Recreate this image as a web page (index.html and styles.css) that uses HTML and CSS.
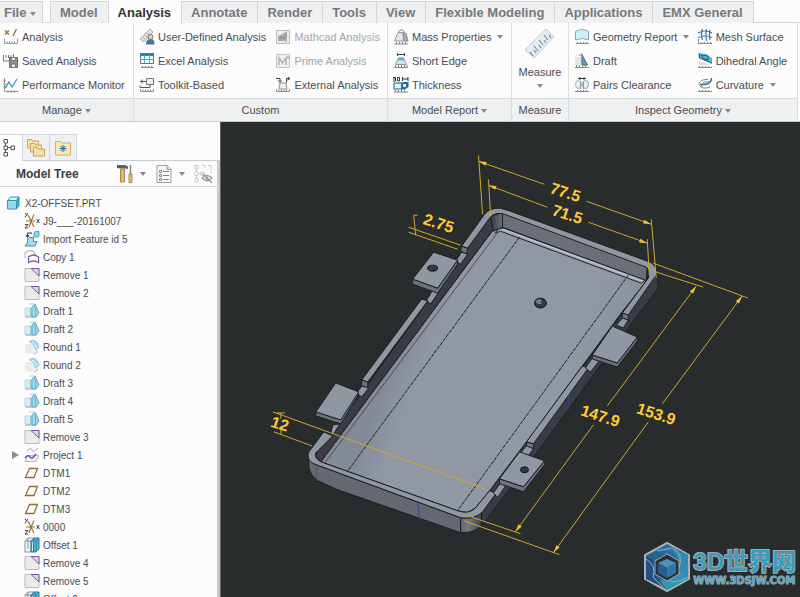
FILE: index.html
```html
<!DOCTYPE html>
<html lang="en">
<head>
  <meta charset="UTF-8" />
  <meta name="viewport" content="width=device-width, initial-scale=1.0" />
  <title>X2-OFFSET.PRT</title>
  <link rel="stylesheet" href="styles.css">
</head>
<body>
  <!-- Icon sheet -->
  <svg class="sprites" aria-hidden="true">
    <symbol id="ruler" viewBox="0 0 16 16">
      <path d="M1.500 12v2.500h13V12M4 12.500v2M6.500 12.500v2M9 12.500v2M11.500 12.500v2" fill="none" stroke="#8b8f92"/>
    </symbol>
    <symbol id="i-analysis" viewBox="0 0 16 16">
      <path d="M2 1.500l4 4M6 1.500l-4 4M13.500 0L10 7" fill="none" stroke="#8f7433" stroke-width="1.300"/>
      <path d="M1.500 9.500v5h13v-5M4 12v2M6.500 12v2M9 12v2M11.500 12v2" fill="none" stroke="#9a9ea1"/>
    </symbol>
    <symbol id="i-saved" viewBox="0 0 16 16">
      <path d="M.500 2v6h6M3 2v3M5.500 2v3M8 2v3M10.500 1v3" fill="none" stroke="#777"/>
      <path d="M6.500 4.500h8v10h-8z" fill="#8d9194" stroke="#666"/>
      <path d="M8.500 4.500h4v3h-4zM8.500 11h4v3.500h-4z" fill="#eee" stroke="#777"/>
    </symbol>
    <symbol id="i-monitor" viewBox="0 0 16 16">
      <path d="M1.500 1v13.500h14M0 4h3M0 7h3M0 10h3M5 13v3M8 13v3M11 13v3" fill="none" stroke="#999"/>
      <path d="M2 11l4-6 3 5 5-8" fill="none" stroke="#3d9cc4" stroke-width="1.400"/>
    </symbol>
    <symbol id="i-user" viewBox="0 0 16 16">
      <path d="M1 10L11 0l3 3-9 10z" fill="#e2e4e5" stroke="#aaa"/>
      <path d="M4 8l2 2M6 6l2 2M8 4l2 2" stroke="#999"/>
      <path d="M7 15.500c0-4 2-5.500 4.500-5.500s4 1.500 4 5.500z" fill="#3f769f"/>
      <circle cx="11.500" cy="8" r="2.500" fill="#d9d3cb" stroke="#777"/>
    </symbol>
    <symbol id="i-excel" viewBox="0 0 16 16">
      <path d="M1.500 .500h13v10h-13z" fill="#eefaff" stroke="#60757f"/>
      <path d="M1 0h14v3H1z" fill="#2587ad"/>
      <path d="M5.500 2v8M10.500 2v8M1 6.500h14" stroke="#4fa9c7"/>
      <path d="M2 14.500h13M3.500 13v2M6.500 13v2M9.500 13v2M12.500 13v2" stroke="#888"/>
    </symbol>
    <symbol id="i-toolkit" viewBox="0 0 16 16">
      <path d="M7.500 1.500h7v6h-7z" fill="#eceeef" stroke="#777"/>
      <path d="M1 4.500h6M3 2.500v4M11 8v2.500H1v-2" fill="none" stroke="#555"/>
      <use href="#ruler"/>
    </symbol>
    <symbol id="i-mathcad" viewBox="0 0 16 16">
      <path d="M1.500 1.500h13v13h-13z" fill="#eee" stroke="#bbb"/>
      <path d="M3 12V7l4-2 5-3v7l-4 3z" fill="#b4b4b4"/>
      <path d="M5 12V7l2 3 2-3v5M11 4v9" fill="none" stroke="#888"/>
    </symbol>
    <symbol id="i-prime" viewBox="0 0 16 16">
      <path d="M1.500 1.500h13v13h-13z" fill="#eee" stroke="#c4c4c4"/>
      <path d="M4 12V5l3.500 5L11 5v7M13 3v3" fill="none" stroke="#b4b4b4" stroke-width="1.500"/>
    </symbol>
    <symbol id="i-external" viewBox="0 0 16 16">
      <path d="M1 1.500h4v3M3.500 3.500L5 5.500l1.500-2M15 1.500h-3.500v4M12.500 0L15 1.500 12.500 3" fill="none" stroke="#444"/>
      <path d="M5 6h6l1 6H4z" fill="#eee" stroke="#999"/>
      <use href="#ruler"/>
    </symbol>
    <symbol id="i-mass" viewBox="0 0 16 16">
      <path d="M6 4c-1-4 6-4 5 0" fill="none" stroke="#777"/>
      <path d="M5 3.500h5L11 12H1.500z" fill="#e3e6e7" stroke="#999"/>
      <path d="M10 3.500l3 1L15 12h-4z" fill="#a7adb0" stroke="#888"/>
      <path d="M1 15h14M3.500 13v2M6.500 13v2M9.500 13v2M12.500 13v2" stroke="#888"/>
    </symbol>
    <symbol id="i-edge" viewBox="0 0 16 16">
      <path d="M4.500 0v3M11.500 0v3M4.500 1.500h7" stroke="#444"/>
      <path d="M5.500 5h5l3 6.500h-11z" fill="#dfe3e5" stroke="#999"/>
      <path d="M5.500 4.500h5l1 3h-7z" fill="#4cb8dc"/>
      <path d="M1 14.500h14M2.500 12v2M5.500 12v2M8.500 12v2M11.500 12v2M14 12v2" stroke="#888"/>
    </symbol>
    <symbol id="i-thick" viewBox="0 0 16 16">
      <path d="M1 6h8v6H1z" fill="#dff4fb" stroke="#1b6585"/>
      <path d="M8 6l3-1h4.500v5L12 12.500H8z" fill="#1f7095"/>
      <path d="M10 7h3v3h-3z" fill="#e7f6fb"/>
      <path d="M0 .500h2.500v3.500H0M0 2h2M4.500 .500v3.500h2v-3.500zM9.500 0v4M15 0v4M9.500 2H15" fill="none" stroke="#333"/>
      <path d="M1 15h14M2.500 13v2M5.500 13v2M8.500 13v2M11.500 13v2" stroke="#888"/>
    </symbol>
    <symbol id="i-geometry" viewBox="0 0 16 16">
      <path d="M1.500 2.500q6-4 13 0v8.500q-6-3-13 0z" fill="#cdf1fa" stroke="#8aa3ad"/>
      <path d="M2 14.500h13M3.500 13v2M6.500 13v2M9.500 13v2M12.500 13v2" stroke="#888"/>
    </symbol>
    <symbol id="i-draft-an" viewBox="0 0 16 16">
      <path d="M1 4h6v8H1z" fill="#e1e4e5"/>
      <path d="M8 2L13.500 12H8z" fill="#4aa7ca" stroke="#3c6477"/>
      <path d="M5 2.500L8 1v11" fill="none" stroke="#888"/>
      <path d="M1 14.500h14M2.500 12v2M5.500 12v2M8.500 12v2M11.500 12v2" stroke="#888"/>
    </symbol>
    <symbol id="i-pairs" viewBox="0 0 16 16">
      <ellipse cx="4.500" cy="7.500" rx="3" ry="4" fill="#eef0f1" stroke="#aaa"/>
      <ellipse cx="11.500" cy="7.500" rx="3" ry="4" fill="#dff3f8" stroke="#8aa3ad"/>
      <path d="M4 1.500h8M6 0v3M10 0v3" stroke="#444"/>
      <path d="M6.500 4v8M9.500 4v8" stroke="#999"/>
      <path d="M1 14.500h14M3.500 13v2M6.500 13v2M9.500 13v2M12.500 13v2" stroke="#888"/>
    </symbol>
    <symbol id="i-mesh" viewBox="0 0 16 16">
      <path d="M1 4q7-4 14 0M1 8.500q7-3 14 0M5.500 0q-2 5 0 11M9.500 0q-1 5 0 12M13 1q-1 5 0 10" fill="none" stroke="#347b9b" stroke-width="1.200"/>
      <path d="M1 14.500h14M1.500 10v4M4.500 13v2M7.500 13v2M10.500 13v2M13.500 13v2" stroke="#888"/>
    </symbol>
    <symbol id="i-dihedral" viewBox="0 0 16 16">
      <path d="M1 0l8 1 6 4v6L2 5z" fill="#58b7d9"/>
      <path d="M4 2l7 1v4L7 6zM2.500 1v4L15 10" fill="none" stroke="#215e7c"/>
      <path d="M2 8l12 4H2z" fill="#dadddf"/>
      <path d="M1 14.500h14M2.500 13v2M5.500 13v2M8.500 13v2M11.500 13v2" stroke="#888"/>
    </symbol>
    <symbol id="i-curvature" viewBox="0 0 16 16">
      <path d="M3 7.500c1 0 8 .500 10-2.500 1-1 1.500-2 1.500-4" fill="none" stroke="#2f7595" stroke-width="1.500"/>
      <path d="M11 2.500C4 2 1 6 2.500 8.500S8 12 13 10M5 10c-1-4 2-5.500 7-5" fill="none" stroke="#7c8589"/>
      <path d="M1 14.500h14M2.500 13v2M5.500 13v2M8.500 13v2M11.500 13v2" stroke="#888"/>
    </symbol>
    <symbol id="i-measure" viewBox="0 0 32 32">
      <path d="M1 22L22 1l8 8L10 30z" fill="#e9ebec" stroke="#c8cbcd"/>
      <path d="M9 28l-3-4M12 25l-2-3M14 23l-4-5M17 20l-2-3M19 17l-4-5M22 15l-2-3M24 12l-4-5M27 10l-2-3" stroke="#5c93ad" stroke-width="1.200"/>
    </symbol>

    <symbol id="t-tree" viewBox="4 0 16 20">
      <path d="M5 1.500h3.500V5H5zM5 8h3.500v3.500H5zM5 14.500h3.500V18H5zM12 8h3.500v3.500H12z" fill="#fff" stroke="#555"/>
      <path d="M6.500 5v3M6.500 12v2.500M9 9.500h3" stroke="#555"/>
    </symbol>
    <symbol id="t-folders" viewBox="0 0 18 20">
      <g fill="#f8dfa8" stroke="#c9a45c">
        <path d="M.500 1.500h4l1 1.500h6v7H.500z"/>
        <path d="M3.500 5.500h4L8.500 7h6v7h-11z"/>
        <path d="M6.500 9.500h4l1 1.500h6v7h-11z"/>
      </g>
    </symbol>
    <symbol id="t-star" viewBox="0 0 18 20">
      <path d="M1.500 3.500h5L8 5h8.500v12h-15z" fill="#fae6b6" stroke="#cfae70"/>
      <path d="M9 7v7M5.500 10.500h7M6.500 8l5 5M11.500 8l-5 5" stroke="#236f99"/>
    </symbol>
    <symbol id="t-hammer" viewBox="0 0 16 20">
      <path d="M0 1h8l3 1.500V5L8 4.500H3L0 4z" fill="#5b6064"/>
      <path d="M3.500 5h4v13h-4z" fill="#e0b674" stroke="#b08450"/>
      <path d="M13.500 1v9" stroke="#888" stroke-width="1.500"/>
      <path d="M12 10h3v8.500h-3z" fill="#e8c07c" stroke="#b08450"/>
    </symbol>
    <symbol id="t-list" viewBox="0 0 16 20">
      <path d="M1 1.500h10l4 4v13H1z" fill="#f7f8f8" stroke="#9aa0a3"/>
      <path d="M11 1.500v4h4" fill="#d7dbdd" stroke="#9aa0a3"/>
      <path d="M3.500 6.500h2v2h-2zM3.500 10.500h2v2h-2zM3.500 14.500h2v2h-2z" fill="none" stroke="#888"/>
      <path d="M7 7.500h6M7 11.500h6M7 15.500h6" stroke="#888"/>
    </symbol>
    <symbol id="t-hide" viewBox="0 0 20 20">
      <path d="M2 1.500h3V5H2zM2 8h3v3.500H2zM2 14.500h3V18H2zM8 8h3v3.500H8zM9 1.500h3v3M15 1.500h3v8M3.500 5v3M3.500 12v2.500M5 9.500h3" fill="none" stroke="#c9ccce"/>
      <path d="M9 14q5-5 10 0-5 5-10 0zM10 10l9 9" fill="none" stroke="#96999c" stroke-width="1.300"/>
      <circle cx="14" cy="14" r="1.500" fill="#96999c"/>
    </symbol>

    <symbol id="f-part" viewBox="0 0 16 16">
      <path d="M1.500 5.500h9V14h-9z" fill="#8fdcf4" stroke="#3d93b4"/>
      <path d="M1.500 5.500L4.500 2H13l-2.500 3.500z" fill="#d3f3fc" stroke="#3d93b4"/>
      <path d="M10.500 5.500L13 2v8.500L10.500 14z" fill="#41a6ca" stroke="#3d93b4"/>
    </symbol>
    <symbol id="f-csys" viewBox="0 0 16 16">
      <path d="M2 8h9M4 2l6 12M10 1.500Q7 8 5 14" stroke="#94762f" stroke-width="1.200" fill="none"/>
      <path d="M1 0l1.500 2L4 0M2.500 2L1 4.500M1 11.500h3L1 15h3M12.500 6l3 4M15.500 6l-3 4" stroke="#444" fill="none"/>
    </symbol>
    <symbol id="f-import" viewBox="0 0 16 16">
      <path d="M3.500 6V2H8M2 4l1.500 2.500L5 4" fill="none" stroke="#333"/>
      <path d="M10 2l1-1.500h4V5l-1 1h-4z" fill="#8bd6ee" stroke="#5aa6c3"/>
      <path d="M3.500 12V8L5 6.500h4.500v4H13L11 15H1l2-3z" fill="#9bdcf1" stroke="#4494b3"/>
    </symbol>
    <symbol id="f-copy" viewBox="0 0 16 16">
      <path d="M1 9V4q5-5 10 0v2" fill="none" stroke="#bcbcc0" stroke-width="1.200"/>
      <path d="M4.500 13.500V8q5-4 10 0v5.500q-5-3-10 0z" fill="#fff" stroke="#7e5aa4" stroke-width="1.300"/>
    </symbol>
    <symbol id="f-remove" viewBox="0 0 16 16">
      <path d="M1 1.500h14v13H1z" fill="#ebebec" stroke="#bcbdbf"/>
      <path d="M7 1.500h8V9z" fill="#ddd0f0" stroke="#7b57a6"/>
    </symbol>
    <symbol id="f-draft" viewBox="0 0 16 16">
      <path d="M1 5h8v8H1z" fill="#d7ebf2" stroke="#c0d6de"/>
      <path d="M8 4l3-3 4 9-3 4H8z" fill="#9ed9ec" stroke="#60a9c4"/>
      <path d="M1 14h11M7 5v8M11 2l1 11" fill="none" stroke="#6baec6"/>
      <path d="M5 1h6" stroke="#ccc"/>
    </symbol>
    <symbol id="f-round" viewBox="0 0 16 16">
      <path d="M1 5h6q3 2 3 9.500H1z" fill="#ececed"/>
      <path d="M10 15l4-4v2l-4 3z" fill="#bbb"/>
      <path d="M5 3q2-2 4-2 6 2 6 8l-4 3Q10 5 5 3z" fill="#8fd8f0"/>
      <path d="M5 3q2-2 4-2 6 2 6 8" fill="none" stroke="#b5cdd6"/>
      <path d="M8 3q4 2 5 6" fill="none" stroke="#fff"/>
    </symbol>
    <symbol id="f-project" viewBox="0 0 16 16">
      <path d="M3 4q3-4 5-1t6-2" fill="none" stroke="#b9b9bc" stroke-width="1.200"/>
      <path d="M1 14.500l3-6h10.500l-2.500 6z" fill="#f3f3f3" stroke="#b5b5b8"/>
      <path d="M1 11q3-4 5-1t6-3" fill="none" stroke="#7c4fb0" stroke-width="1.500"/>
    </symbol>
    <symbol id="f-plane" viewBox="0 0 16 16">
      <path d="M1.500 12.500l4-9h8l-3.500 9z" fill="none" stroke="#8e7338" stroke-width="1.300"/>
    </symbol>
    <symbol id="f-offset" viewBox="0 0 16 16">
      <path d="M1 4l3-3h6v11l-3 3H1zM1 4h6v11M7 4l3-3M4 1v11" fill="#f5f7f8" stroke="#8b9396"/>
      <path d="M7 4l3-3h5v11l-3 3H7z" fill="#53b3d4" stroke="#23779b"/>
      <path d="M7 4h5v11M12 4l3-3M9.500 4v11" fill="none" stroke="#2c82a5"/>
      <path d="M8 5h1v9H8z" fill="#c9edf8"/>
    </symbol>
  </svg>

  <!-- Ribbon -->
  <header class="ribbon">
    <nav class="tabs">
      <button class="tab file-tab">File <span class="caret"></span></button>
      <button class="tab first">Model</button>
      <button class="tab active">Analysis</button>
      <button class="tab">Annotate</button>
      <button class="tab">Render</button>
      <button class="tab">Tools</button>
      <button class="tab">View</button>
      <button class="tab">Flexible Modeling</button>
      <button class="tab">Applications</button>
      <button class="tab">EMX General</button>
    </nav>

    <div class="groups">
      <section class="group">
        <div class="commands">
          <div class="column">
            <button class="command"><svg class="icon"><use href="#i-analysis"/></svg>Analysis</button>
            <button class="command"><svg class="icon"><use href="#i-saved"/></svg>Saved Analysis</button>
            <button class="command"><svg class="icon"><use href="#i-monitor"/></svg>Performance Monitor</button>
          </div>
        </div>
        <button class="group-title">Manage <span class="caret"></span></button>
      </section>

      <section class="group">
        <div class="commands">
          <div class="column custom-column">
            <button class="command"><svg class="icon"><use href="#i-user"/></svg>User-Defined Analysis</button>
            <button class="command"><svg class="icon"><use href="#i-excel"/></svg>Excel Analysis</button>
            <button class="command"><svg class="icon"><use href="#i-toolkit"/></svg>Toolkit-Based</button>
          </div>
          <div class="column">
            <button class="command" disabled><svg class="icon"><use href="#i-mathcad"/></svg>Mathcad Analysis</button>
            <button class="command" disabled><svg class="icon"><use href="#i-prime"/></svg>Prime Analysis</button>
            <button class="command"><svg class="icon"><use href="#i-external"/></svg>External Analysis</button>
          </div>
        </div>
        <div class="group-title">Custom</div>
      </section>

      <section class="group">
        <div class="commands">
          <div class="column">
            <button class="command"><svg class="icon"><use href="#i-mass"/></svg>Mass Properties <span class="caret"></span></button>
            <button class="command"><svg class="icon"><use href="#i-edge"/></svg>Short Edge</button>
            <button class="command"><svg class="icon"><use href="#i-thick"/></svg>Thickness</button>
          </div>
        </div>
        <button class="group-title">Model Report <span class="caret"></span></button>
      </section>

      <section class="group">
        <button class="big-command">
          <svg class="big-icon"><use href="#i-measure"/></svg>
          Measure
          <span class="caret"></span>
        </button>
        <div class="group-title">Measure</div>
      </section>

      <section class="group">
        <div class="commands">
          <div class="column inspect-column">
            <button class="command"><svg class="icon"><use href="#i-geometry"/></svg>Geometry Report <span class="caret"></span></button>
            <button class="command"><svg class="icon"><use href="#i-draft-an"/></svg>Draft</button>
            <button class="command"><svg class="icon"><use href="#i-pairs"/></svg>Pairs Clearance</button>
          </div>
          <div class="column">
            <button class="command"><svg class="icon"><use href="#i-mesh"/></svg>Mesh Surface</button>
            <button class="command"><svg class="icon"><use href="#i-dihedral"/></svg>Dihedral Angle</button>
            <button class="command"><svg class="icon"><use href="#i-curvature"/></svg>Curvature <span class="caret"></span></button>
          </div>
        </div>
        <button class="group-title">Inspect Geometry <span class="caret"></span></button>
      </section>
    </div>
  </header>

  <div class="workspace">
    <!-- Model tree -->
    <aside class="sidebar">
      <div class="panel-tabs">
        <button class="panel-tab active" aria-label="Model Tree"><svg class="tool-icon"><use href="#t-tree"/></svg></button>
        <button class="panel-tab" aria-label="Folder Browser"><svg class="tool-icon"><use href="#t-folders"/></svg></button>
        <button class="panel-tab" aria-label="Favorites"><svg class="tool-icon"><use href="#t-star"/></svg></button>
      </div>
      <div class="tree-header">
        <h2>Model Tree</h2>
        <button class="tool" aria-label="Settings"><svg class="tool-icon"><use href="#t-hammer"/></svg><span class="caret"></span></button>
        <button class="tool" aria-label="Show"><svg class="tool-icon"><use href="#t-list"/></svg><span class="caret"></span></button>
        <button class="tool" aria-label="Hide tree"><svg class="tool-icon"><use href="#t-hide"/></svg></button>
      </div>
      <ul class="tree">
        <li class="root"><svg class="icon"><use href="#f-part"/></svg>X2-OFFSET.PRT</li>
        <li><svg class="icon"><use href="#f-csys"/></svg>J9-___-20161007</li>
        <li><svg class="icon"><use href="#f-import"/></svg>Import Feature id 5</li>
        <li><svg class="icon"><use href="#f-copy"/></svg>Copy 1</li>
        <li><svg class="icon"><use href="#f-remove"/></svg>Remove 1</li>
        <li><svg class="icon"><use href="#f-remove"/></svg>Remove 2</li>
        <li><svg class="icon"><use href="#f-draft"/></svg>Draft 1</li>
        <li><svg class="icon"><use href="#f-draft"/></svg>Draft 2</li>
        <li><svg class="icon"><use href="#f-round"/></svg>Round 1</li>
        <li><svg class="icon"><use href="#f-round"/></svg>Round 2</li>
        <li><svg class="icon"><use href="#f-draft"/></svg>Draft 3</li>
        <li><svg class="icon"><use href="#f-draft"/></svg>Draft 4</li>
        <li><svg class="icon"><use href="#f-draft"/></svg>Draft 5</li>
        <li><svg class="icon"><use href="#f-remove"/></svg>Remove 3</li>
        <li class="collapsed"><button class="expander" aria-label="Expand Project 1"></button><svg class="icon"><use href="#f-project"/></svg>Project 1</li>
        <li><svg class="icon"><use href="#f-plane"/></svg>DTM1</li>
        <li><svg class="icon"><use href="#f-plane"/></svg>DTM2</li>
        <li><svg class="icon"><use href="#f-plane"/></svg>DTM3</li>
        <li><svg class="icon"><use href="#f-csys"/></svg>0000</li>
        <li><svg class="icon"><use href="#f-offset"/></svg>Offset 1</li>
        <li><svg class="icon"><use href="#f-remove"/></svg>Remove 4</li>
        <li><svg class="icon"><use href="#f-remove"/></svg>Remove 5</li>
        <li><svg class="icon"><use href="#f-offset"/></svg>Offset 2</li>
      </ul>
    </aside>

    <!-- Graphics area -->
    <main class="viewport">
      <svg class="scene" viewBox="220 122 580 475" preserveAspectRatio="xMidYMid meet">
        <defs>
          <linearGradient id="floor" gradientUnits="userSpaceOnUse" x1="395" y1="350" x2="590" y2="425">
            <stop offset="0" stop-color="#828a95"/>
            <stop offset=".15" stop-color="#9098a3"/>
            <stop offset=".8" stop-color="#9098a3"/>
            <stop offset="1" stop-color="#8a929d"/>
          </linearGradient>
          <linearGradient id="corner" x1="0" x2="1">
            <stop offset="0" stop-color="#62666e"/>
            <stop offset=".4" stop-color="#73777f"/>
            <stop offset="1" stop-color="#3c3f46"/>
          </linearGradient>
          <linearGradient id="inside" x1="0" x2="1">
            <stop offset="0" stop-color="#353840"/>
            <stop offset="1" stop-color="#6d727a"/>
          </linearGradient>
          <marker id="arrow" viewBox="0 0 8 6" refX="8" refY="3" markerWidth="8" markerHeight="6" orient="auto-start-reverse">
            <path d="M0 1l8 2-8 2z" fill="#f2bf30"/>
          </marker>
        </defs>

        <g class="solid">
          <!-- outer walls -->
          <path class="dark" d="M656 272L658 288 604 360 535 455 485 521 481 525V510L489 491 583 366 622 313z"/>
          <path class="front" d="M308 458L313 464 460 518V533L337 490 317 481Q310 476 308 468z"/>
          <path fill="url(#corner)" d="M460 518H473Q478 517 481 511V525Q477 533 460 533z"/>
          <path class="seam" d="M316 465V481"/>

          <!-- floor and inner walls -->
          <path fill="url(#floor)" d="M493 229L500 228 646 281 621 313 582 366 526 442 489 491 475 508 467 513 457 511 320 462z"/>
          <path class="dark" d="M490 216L493 229 320 462 315 459V453L361 393 428 300 466 249z"/>
          <path fill="url(#inside)" d="M490 216L502 212V227L493 231z"/>
          <path class="back" d="M502 212L647 266 646 281 502 227z"/>
          <path class="fillet" d="M495 233Q498 227 503 228L645 280 641 283 500 231z"/>
          <path class="highlight" d="M503 229L642 281"/>
          <path class="seam" d="M498 231L324 463"/>

          <!-- rim -->
          <path class="top" d="M461 246L484 214Q490 207 500 208L510 211 650 262Q657 266 656 275L628 315 622 313 648 278Q650 270 646 267L504 214Q494 211 489 218L467 248z"/>
          <path class="side" d="M461 246L467 248 466 254 460 251zM622 313L628 315V321L622 318z"/>
          <path class="top" d="M421 299L427 301 367 382 361 380z"/>
          <path class="side" d="M361 380L367 382V388L361 386z"/>
          <path class="top" d="M323 432L332 436 315 453Q313 458 320 462L457 511Q468 515 475 508L489 491 496 493 482 512Q475 520 460 518L313 464Q305 460 308 452z"/>
          <path class="top" d="M582 366L588 368 533 444 526 442z"/>
          <path class="side" d="M526 442L533 444V449L526 447z"/>

          <!-- steps beside the clips -->
          <path class="top" d="M455 261L461 252 467 254 460 264zM426 300L432 290 438 292 430 304zM356 393L361 386 368 388 361 397zM330 433L332 425 339 424 333 434zM616 325L622 318 628 320 623 328zM585 368L592 358 599 361 590 372zM520 453L526 446 533 449 527 457zM493 493L500 483 505 486 497 498z"/>

          <!-- clips -->
          <path class="side" d="M412 279L437 288 457 260V264L437 293 412 284zM315 412L340 420 357 392V396L340 424 315 416zM592 355L617 363 637 337V341L617 367 592 359zM499 479L523 487 544 461V465L523 492 499 484z"/>
          <path class="top" d="M433 252L457 260 437 288 412 279zM335 383L358 392 340 420 315 412zM612 326L637 337 617 363 592 355zM519 452L544 461 523 487 499 479z"/>

          <!-- surface breaks -->
          <path class="break" d="M519 237L347 471M628 275L457 511"/>
          <path class="datum" d="M417 504L419 520M568 395V410"/>

          <!-- holes -->
          <ellipse class="hole" cx="432" cy="268" rx="5" ry="3"/>
          <ellipse class="hole" cx="540" cy="303" rx="6" ry="5"/>
          <ellipse class="hole" cx="524" cy="470" rx="4" ry="3"/>
          <path class="hole-wall" d="M535 301Q540 297 541 301L541 304 537 304z"/>
        </g>

        <!-- dimensions -->
        <g class="dimension">
          <path d="M478 155L482 214M651 219L656 278M488 179L490 215M647 239L649 275"/>
          <path marker-start="url(#arrow)" d="M478 161L544 184"/>
          <path marker-end="url(#arrow)" d="M586 201L651 224"/>
          <path marker-start="url(#arrow)" d="M488 185L547 207"/>
          <path marker-end="url(#arrow)" d="M588 222L647 243"/>
          <path d="M408 227L460 245M408 232L457 249M417 215H413L415 235"/>
          <path d="M272 412L487 490M273 432L311 446M276 413H284M280 413V419M280 429V435"/>
          <path d="M650 270L703 287M653 263L748 298M467 516L520 534M463 521L559 555"/>
          <path marker-start="url(#arrow)" d="M696 286L607 406"/>
          <path marker-end="url(#arrow)" d="M593 425L515 532"/>
          <path marker-start="url(#arrow)" d="M742 296L662 404"/>
          <path marker-end="url(#arrow)" d="M648 422L553 553"/>
        </g>
        <g class="dimension-text">
          <text transform="translate(565 192) rotate(18)">77.5</text>
          <text transform="translate(567 214) rotate(18)">71.5</text>
          <text transform="translate(438 223) rotate(18)">2.75</text>
          <text transform="translate(279 424) rotate(18)">12</text>
          <text transform="translate(600 416) rotate(18)">147.9</text>
          <text transform="translate(656 414) rotate(18)">153.9</text>
        </g>
      </svg>

      <div class="watermark">
        <svg class="emblem" viewBox="0 0 48 52">
          <path d="M24 2L46 14V38L24 50 2 38V14z" fill="#26658f" stroke="#a9b1b3" stroke-width="2"/>
          <path d="M24 3L45 14 36 22 24 14 14 10z" fill="#2c6da5"/>
          <path d="M45 14V37L36 34V20L29 7z" fill="#328caf"/>
          <path d="M45 38L24 49 17 40 26 38 37 31z" fill="#3196b6"/>
          <path d="M3 38V15L12 20V33L20 46z" fill="#244f86"/>
          <path d="M14 10L29 7Q41 12 36 27M45 36Q34 44 20 38M3 18Q14 25 10 36L20 46" fill="none" stroke="#8ab4c4"/>
          <path d="M24 13L36 20V33L24 40 12 33V20z" fill="#2a3035" stroke="#9ba9ae"/>
          <path d="M24 18L33 22 24 27 15 22z" fill="#4c91bd"/>
          <path d="M15 22L24 27V37L15 32z" fill="#275b91"/>
          <path d="M33 22L24 27V37L33 32z" fill="#2f78a1"/>
        </svg>
        <div class="brand">
          <span class="brand-name">3D世界网</span>
          <span class="brand-url">WWW.3DSJW.COM</span>
        </div>
      </div>
    </main>
  </div>
</body>
</html>
```

FILE: styles.css
```css
* {
  box-sizing: border-box;
}
body {
  margin: 0;
  height: 100vh;
  display: flex;
  flex-direction: column;
  overflow: hidden;
  font-family: "Liberation Sans", Arial, sans-serif;
  font-size: 11px;
  color: #4a4c4e;
  background-color: #fcfcfc;
}
button {
  margin: 0;
  padding: 0;
  border: none;
  background: none;
  font: inherit;
  color: inherit;
  white-space: nowrap;
  cursor: pointer;
}
.sprites {
  display: none;
}
.icon {
  width: 16px;
  height: 16px;
  flex: none;
}
.caret {
  display: inline-block;
  border: 3px solid transparent;
  border-top: 4px solid #85898c;
  border-bottom: none;
  vertical-align: middle;
}

/* Ribbon */
.tabs {
  display: flex;
  height: 23px;
  border-bottom: 1px solid #d5d8da;
}
.tab {
  height: 22px;
  margin-top: 1px;
  padding: 0 10px 0 9px;
  border: 1px solid #d3d6d8;
  border-left: none;
  border-bottom: none;
  background-color: #eef0f1;
  font-size: 13px;
  font-weight: bold;
  color: #76797c;
}
.file-tab {
  padding: 0 6px 0 4px;
  margin-right: 7px;
}
.tab.first {
  border-left: 1px solid #d3d6d8;
}
.tab.active {
  height: 23px;
  border-top: none;
  background-color: #fcfcfc;
  color: #333;
}
.groups {
  display: grid;
  grid-template-columns: 134fr 254fr 124fr 57fr 229fr;
  padding-right: 2px;
  border-bottom: 1px solid #c9cccf;
}
.group {
  display: flex;
  flex-direction: column;
  border-right: 1px solid #dcdee0;
}
.commands {
  display: flex;
  flex: 1;
  padding: 2px 0 1px 5px;
}
.group:first-child .commands {
  padding-left: 3px;
}
.custom-column {
  flex: 0 0 55%;
}
.inspect-column {
  flex: 0 0 55%;
}
.command {
  display: flex;
  align-items: center;
  gap: 3px;
  height: 24px;
}
.command .caret {
  margin-left: 3px;
}
.command:disabled {
  color: #a3a5a7;
}
.group-title {
  height: 23px;
  border-top: 1px solid #d5d8da;
  background-color: #eef0f1;
  line-height: 22px;
  text-align: center;
}
.big-command {
  display: flex;
  flex: 1;
  flex-direction: column;
  align-items: center;
  padding-top: 5px;
}
.big-command .caret {
  margin-top: 6px;
}
.big-icon {
  width: 32px;
  height: 32px;
  margin-bottom: 6px;
}

/* Sidebar */
.workspace {
  display: flex;
  flex: 1;
  min-height: 0;
}
.sidebar {
  flex: 0 0 221px;
  overflow: hidden;
  border-right: 1px solid #5d6163;
}
.panel-tabs {
  display: flex;
  height: 39px;
  padding-top: 12px;
  border-bottom: 1px solid #c9cccf;
}
.panel-tab {
  display: flex;
  align-items: center;
  justify-content: center;
  width: 27px;
  height: 26px;
  border: 1px solid #d3d6d8;
  border-left: none;
  border-bottom: none;
  background-color: #eef0f1;
}
.panel-tab.active {
  width: 23px;
  height: 27px;
  background-color: #fcfcfc;
}
.tool-icon {
  width: 20px;
  height: 20px;
}
.tree-header {
  display: flex;
  align-items: center;
  gap: 8px;
  height: 26px;
  padding: 0 4px 0 16px;
  border-right: 3px solid #c6cacc;
  border-bottom: 1px solid #d5d8da;
}
.tree-header h2 {
  flex: 1;
  margin: 0;
  font-size: 12px;
  color: #3c3e40;
}
.tool {
  display: flex;
  align-items: center;
  gap: 5px;
}
.tree {
  height: 100%;
  margin: 0;
  padding: 7px 0 0;
  border-right: 3px solid #c6cacc;
  list-style: none;
  font-size: 10px;
}
.tree li {
  display: flex;
  align-items: center;
  gap: 3px;
  height: 18px;
  padding-left: 24px;
  white-space: nowrap;
}
.tree .root {
  padding-left: 6px;
}
.tree .collapsed {
  padding-left: 12px;
}
.expander {
  border: 4px solid transparent;
  border-left: 7px solid #8c8f91;
  border-right: none;
  margin-right: 2px;
}

/* Graphics area */
.viewport {
  position: relative;
  flex: 1;
  min-width: 0;
  background-color: #282c2d;
}
.scene {
  display: block;
  width: 100%;
  height: 100%;
}
.solid path {
  stroke: #1c1f22;
  stroke-linejoin: round;
}
.top {
  fill: #8f97a2;
}
.side {
  fill: #6c727c;
}
.front {
  fill: #646870;
}
.back {
  fill: #6b7078;
}
.dark {
  fill: #3b3c43;
}
.fillet {
  fill: #a4adb8;
}
.hole {
  fill: #34383d;
  stroke: #17191c;
}
.solid .hole-wall {
  fill: #777d85;
  stroke: none;
}
.solid .highlight {
  stroke: #c2cad4;
}
.solid .seam {
  fill: none;
  stroke: #4c525a;
}
.solid .break {
  stroke-dasharray: 4 1;
}
.solid .datum {
  stroke: #3a3c8e;
}
.dimension path {
  fill: none;
  stroke: #d2a72f;
}
.dimension-text {
  fill: #ffcb32;
  font-size: 16px;
  font-weight: bold;
  text-anchor: middle;
  dominant-baseline: central;
}
.watermark {
  position: absolute;
  right: 4px;
  bottom: 4px;
  display: flex;
  align-items: center;
  gap: 2px;
}
.emblem {
  width: 48px;
  height: 52px;
}
.brand {
  display: flex;
  flex-direction: column;
  color: #3a9cbd;
  -webkit-text-stroke: 2px #a3abad;
  paint-order: stroke fill;
}
.brand-name {
  font-family: "Liberation Sans", "Noto Sans CJK SC", sans-serif;
  font-size: 24px;
  font-weight: bold;
  line-height: 28px;
}
.brand-url {
  font-family: "DejaVu Sans", sans-serif;
  font-size: 10px;
  font-weight: bold;
  line-height: 10px;
  color: #5fa9c2;
  -webkit-text-stroke: 1px #a3abad;
}
```
